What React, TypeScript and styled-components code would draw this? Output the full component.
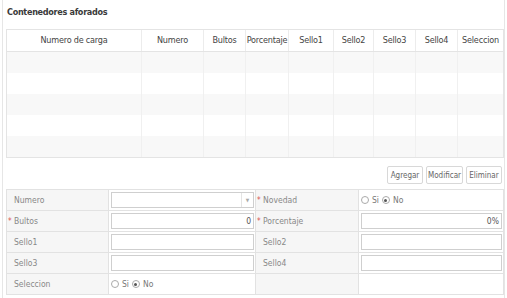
import React from 'react';
import styled, { createGlobalStyle } from 'styled-components';

const GlobalStyle = createGlobalStyle`
  body {
    margin: 0;
    background: #ffffff;
    font-family: 'DejaVu Sans Condensed', 'Liberation Sans', sans-serif;
  }
`;

const Panel = styled.div`
  width: 503px;
  height: 298px;
  margin-left: 2px;
  border-left: 1px solid #e6e6e6;
  border-right: 1px solid #e6e6e6;
  padding: 0 2px 0 3px;
  box-sizing: border-box;
`;

const Title = styled.div`
  height: 29px;
  line-height: 25px;
  padding-left: 1px;
  font-size: 9px;
  font-weight: bold;
  letter-spacing: -0.3px;
  color: #3a3a3a;
`;

const Table = styled.div`
  border: 1px solid #e4e4e4;
  width: 498px;
  box-sizing: border-box;
`;

const cols = '135px 62px 42px 43px 45px 40px 42px 42px 1fr';

const HeaderRow = styled.div`
  display: grid;
  grid-template-columns: ${cols};
  height: 21px;
  border-bottom: 1px solid #e4e4e4;
`;

const HeaderCell = styled.div`
  font-size: 9px;
  color: #444;
  text-align: center;
  line-height: 21px;
  white-space: nowrap;
  letter-spacing: -0.2px;
  border-right: 1px solid #ececec;
  &:last-child {
    border-right: none;
  }
`;

const BodyRow = styled.div<{ $striped: boolean }>`
  display: grid;
  grid-template-columns: ${cols};
  height: 21px;
  background: ${p => (p.$striped ? '#f8f8f8' : '#ffffff')};
`;

const BodyCell = styled.div`
  border-right: 1px solid #f0f0f0;
  &:last-child {
    border-right: none;
  }
`;

const ButtonBar = styled.div`
  display: flex;
  justify-content: flex-end;
  gap: 3px;
  height: 31px;
  padding-top: 8px;
  box-sizing: border-box;
`;

const Button = styled.button<{ $w: number }>`
  width: ${p => p.$w}px;
  height: 18px;
  padding: 0;
  font-family: inherit;
  font-size: 8px;
  color: #666;
  background: #fff;
  border: 1px solid #d8d8d8;
  border-radius: 2px;
  white-space: nowrap;
`;

const Form = styled.div`
  display: grid;
  grid-template-columns: 102px 147px 103px 1fr;
  grid-auto-rows: 21px;
  width: 498px;
  border-top: 1px solid #e2e2e2;
  border-left: 1px solid #e2e2e2;
  box-sizing: border-box;
`;

const LabelCell = styled.div`
  background: #f6f6f6;
  border-right: 1px solid #e2e2e2;
  border-bottom: 1px solid #e2e2e2;
  font-size: 8.5px;
  color: #888;
  display: flex;
  align-items: center;
  padding-left: 7px;
`;

const FieldCell = styled.div`
  background: #fff;
  border-right: 1px solid #e2e2e2;
  border-bottom: 1px solid #e2e2e2;
  display: flex;
  align-items: center;
  padding: 0 1px 0 2px;
`;

const Req = styled.span`
  color: #d9534f;
  font-size: 8px;
  margin-left: -6px;
  width: 6px;
`;

const Box = styled.div<{ $right?: boolean }>`
  flex: 1;
  height: 16px;
  border: 1px solid #cfcfcf;
  box-sizing: border-box;
  font-size: 8.5px;
  color: #555;
  line-height: 14px;
  padding: 0 2px;
  display: flex;
  justify-content: ${p => (p.$right ? 'flex-end' : 'flex-start')};
`;

const SelectBox = styled(Box)`
  justify-content: space-between;
  padding-right: 0;
`;

const Arrow = styled.span`
  width: 11px;
  border-left: 1px solid #e4e4e4;
  color: #aaa;
  font-size: 5px;
  text-align: center;
`;

const Radios = styled.div`
  display: flex;
  align-items: center;
  gap: 3px;
  font-size: 8.5px;
  color: #777;
`;

const Radio = styled.span<{ $on: boolean }>`
  width: 8px;
  height: 8px;
  border: 1px solid #aaa;
  border-radius: 50%;
  box-sizing: border-box;
  display: inline-flex;
  align-items: center;
  justify-content: center;
  &::after {
    content: '';
    width: 3px;
    height: 3px;
    border-radius: 50%;
    background: ${p => (p.$on ? '#555' : 'transparent')};
  }
`;

const headers = ['Numero de carga', 'Numero', 'Bultos', 'Porcentaje', 'Sello1', 'Sello2', 'Sello3', 'Sello4', 'Seleccion'];

const SiNo = () => (
  <Radios>
    <Radio $on={false} />
    <span>Si</span>
    <Radio $on={true} />
    <span>No</span>
  </Radios>
);

export default function App() {
  return (
    <>
      <GlobalStyle />
      <Panel>
        <Title>Contenedores aforados</Title>
        <Table>
          <HeaderRow>
            {headers.map(h => (
              <HeaderCell key={h}>{h}</HeaderCell>
            ))}
          </HeaderRow>
          {[0, 1, 2, 3, 4].map(i => (
            <BodyRow key={i} $striped={i % 2 === 0}>
              {headers.map(h => (
                <BodyCell key={h} />
              ))}
            </BodyRow>
          ))}
        </Table>
        <ButtonBar>
          <Button $w={36}>Agregar</Button>
          <Button $w={37}>Modificar</Button>
          <Button $w={36}>Eliminar</Button>
        </ButtonBar>
        <Form>
          <LabelCell>Numero</LabelCell>
          <FieldCell>
            <SelectBox>
              <span />
              <Arrow>▼</Arrow>
            </SelectBox>
          </FieldCell>
          <LabelCell><Req>*</Req>Novedad</LabelCell>
          <FieldCell><SiNo /></FieldCell>

          <LabelCell><Req>*</Req>Bultos</LabelCell>
          <FieldCell><Box $right>0</Box></FieldCell>
          <LabelCell><Req>*</Req>Porcentaje</LabelCell>
          <FieldCell><Box $right>0%</Box></FieldCell>

          <LabelCell>Sello1</LabelCell>
          <FieldCell><Box /></FieldCell>
          <LabelCell>Sello2</LabelCell>
          <FieldCell><Box /></FieldCell>

          <LabelCell>Sello3</LabelCell>
          <FieldCell><Box /></FieldCell>
          <LabelCell>Sello4</LabelCell>
          <FieldCell><Box /></FieldCell>

          <LabelCell>Seleccion</LabelCell>
          <FieldCell><SiNo /></FieldCell>
          <LabelCell />
          <FieldCell />
        </Form>
      </Panel>
    </>
  );
}
